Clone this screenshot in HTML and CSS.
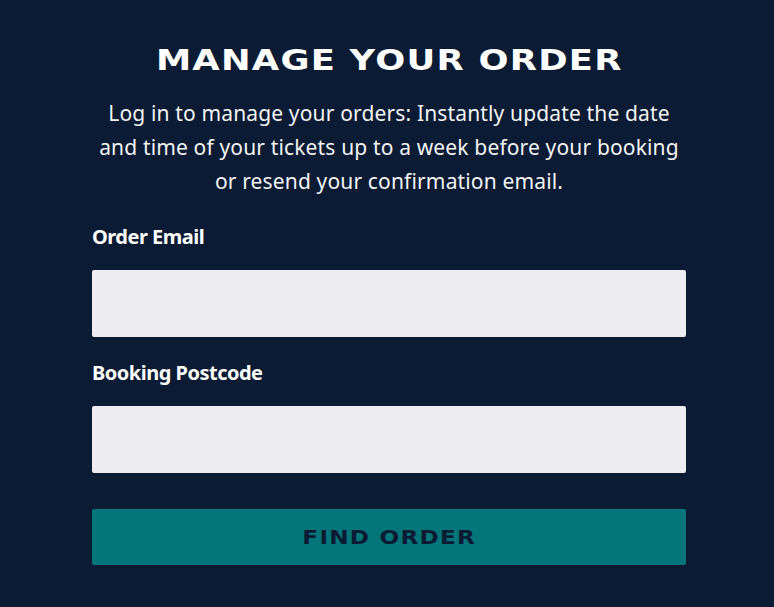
FILE: index.html
```html
<!DOCTYPE html>
<html lang="en">
<head>
<meta charset="utf-8">
<title>Manage your order</title>
<link rel="stylesheet" href="styles.css">
</head>
<body>
<main class="page">
  <h1 class="title"><span class="title-text">MANAGE YOUR ORDER</span></h1>
  <p class="intro">Log in to manage your orders: Instantly update the date and time of your tickets up to a week before your booking or resend your confirmation email.</p>
  <form class="form">
    <label class="field">
      <span class="label">Order Email</span>
      <input class="input" type="email">
    </label>
    <label class="field">
      <span class="label">Booking Postcode</span>
      <input class="input" type="text">
    </label>
    <button class="button" type="button"><span class="button-text">FIND ORDER</span></button>
  </form>
</main>
</body>
</html>
```
FILE: styles.css
```css
html, body {
  margin: 0;
  padding: 0;
  background: #0a1b33;
  height: 100%;
}
body {
  font-family: "Noto Sans", "Open Sans", sans-serif;
  color: #ffffff;
}
.page {
  width: 594px;
  margin: 0 0 0 92px;
  padding-top: 40px;
  display: flex;
  flex-direction: column;
  align-items: center;
}
.title {
  margin: 0;
  font-family: "DejaVu Sans", sans-serif;
  font-weight: bold;
  font-size: 29px;
  line-height: 40px;
  text-align: center;
  width: 100%;
}
.title-text {
  display: inline-block;
  transform: scaleX(1.22);
  letter-spacing: 1px;
}
.intro {
  margin: 16px 0 0;
  width: 590px;
  font-size: 21px;
  line-height: 34px;
  letter-spacing: 0.15px;
  text-align: center;
  color: #f3f3f5;
}
.form {
  width: 100%;
  display: flex;
  flex-direction: column;
  margin-top: 24px;
}
.field {
  display: flex;
  flex-direction: column;
  margin-bottom: 21px;
}
.label {
  font-weight: bold;
  font-size: 20px;
  line-height: 30px;
  letter-spacing: -0.5px;
  margin-bottom: 18px;
}
.input {
  height: 67px;
  box-sizing: border-box;
  border: none;
  border-radius: 2px;
  background: #edecf1;
  margin: 0;
}
.button {
  margin-top: 15px;
  height: 56px;
  border: none;
  border-radius: 2px;
  background: #047578;
  color: #0a1b33;
  font-family: "DejaVu Sans", sans-serif;
  font-weight: bold;
  font-size: 19px;
}
.button-text {
  display: inline-block;
  transform: scaleX(1.22);
  letter-spacing: 1px;
}
```
